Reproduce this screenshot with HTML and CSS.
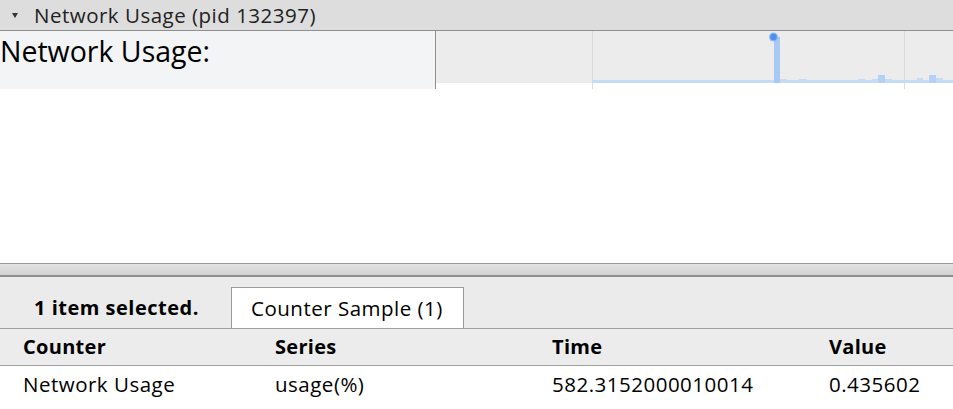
FILE: index.html
```html
<!DOCTYPE html>
<html>
<head>
<meta charset="utf-8">
<link rel="stylesheet" href="styles.css">
</head>
<body>
<div class="page">
  <div class="track-header">
    <span class="caret"></span>
    <span class="track-title">Network Usage (pid 132397)</span>
  </div>
  <div class="track-row">
    <div class="track-label">Network Usage:</div>
    <div class="track-chart">
      <svg width="517" height="58" viewBox="0 0 517 58">
        <rect x="0" y="0" width="517" height="52" fill="#ececec"/>
        <rect x="156" y="0" width="1" height="58" fill="#dcdcdc"/>
        <rect x="468" y="0" width="1" height="58" fill="#dcdcdc"/>
        <rect x="156" y="49" width="361" height="3" fill="#c6dcf6"/>
        <rect x="344" y="48" width="7" height="4" fill="#c6dcf6"/>
        <rect x="363" y="48" width="8" height="4" fill="#c6dcf6"/>
        <rect x="422" y="48" width="7" height="4" fill="#c6dcf6"/>
        <rect x="436" y="48" width="6" height="4" fill="#c6dcf6"/>
        <rect x="442" y="44" width="7" height="8" fill="#b4d0f6"/>
        <rect x="449" y="48" width="7" height="4" fill="#c6dcf6"/>
        <rect x="481" y="47" width="6" height="5" fill="#c6dcf6"/>
        <rect x="493" y="44" width="7" height="8" fill="#b4d0f6"/>
        <rect x="500" y="47" width="7" height="5" fill="#c6dcf6"/>
        <rect x="338" y="6" width="6" height="46" fill="#a8c8f6"/>
        <circle cx="337.5" cy="6" r="4.5" fill="#8db8f5"/>
        <circle cx="337.5" cy="6" r="3.2" fill="#4d8ff0"/>
      </svg>
    </div>
  </div>
  <div class="empty-area"></div>
  <div class="splitter"></div>
  <div class="bottom-panel">
    <div class="tab-strip">
      <div class="selection-info">1 item selected.</div>
      <div class="tab">Counter Sample (1)</div>
    </div>
    <div class="table">
      <div class="row head">
        <div class="cell">Counter</div>
        <div class="cell">Series</div>
        <div class="cell">Time</div>
        <div class="cell">Value</div>
      </div>
      <div class="row data">
        <div class="cell">Network Usage</div>
        <div class="cell">usage(%)</div>
        <div class="cell">582.3152000010014</div>
        <div class="cell">0.435602</div>
      </div>
    </div>
  </div>
</div>
</body>
</html>
```
FILE: styles.css
```css
html, body {
  margin: 0;
  padding: 0;
  background: #ffffff;
}
body {
  font-family: "Open Sans", "Noto Sans", sans-serif;
  color: #000;
  width: 953px;
  height: 409px;
  overflow: hidden;
}
.page {
  display: flex;
  flex-direction: column;
  width: 953px;
  height: 409px;
}
.track-header {
  height: 30px;
  background: #dddddd;
  border-bottom: 1px solid #8e8e8e;
  display: flex;
  align-items: center;
  flex-shrink: 0;
}
.caret {
  width: 0;
  height: 0;
  border-left: 3px solid transparent;
  border-right: 3px solid transparent;
  border-top: 5px solid #333;
  margin-left: 12px;
  margin-right: 16px;
  margin-top: 0;
}
.track-title {
  font-size: 20.5px;
  color: #222;
  line-height: 28px;
  letter-spacing: 0.5px;
}
.track-row {
  display: flex;
  height: 58px;
  flex-shrink: 0;
}
.track-label {
  width: 436px;
  background: #f3f4f6;
  border-right: 1px solid #8e8e8e;
  font-size: 28.5px;
  line-height: 38px;
  padding-top: 1px;
  box-sizing: border-box;
}
.track-chart {
  width: 517px;
  height: 58px;
}
.track-chart svg {
  display: block;
}
.empty-area {
  height: 174px;
  flex-shrink: 0;
}
.splitter {
  height: 11px;
  border-top: 1px solid #9a9a9a;
  border-bottom: 2px solid #8e8e8e;
  background: linear-gradient(#e2e2e2, #d2d2d2);
  flex-shrink: 0;
}
.bottom-panel {
  background: #ebebeb;
  flex: 1;
  display: flex;
  flex-direction: column;
}
.tab-strip {
  display: flex;
  align-items: flex-end;
  height: 51px;
  border-bottom: 1px solid #a0a0a0;
  flex-shrink: 0;
}
.selection-info {
  font-weight: 700;
  font-size: 20px;
  letter-spacing: 0.5px;
  padding-left: 34px;
  box-sizing: border-box;
  width: 231px;
  line-height: 40px;
}
.tab {
  width: 233px;
  height: 41px;
  box-sizing: border-box;
  background: #fff;
  border: 1px solid #999;
  border-bottom: none;
  font-size: 20.5px;
  letter-spacing: 0.5px;
  padding-left: 19px;
  line-height: 40px;
}
.table {
  display: flex;
  flex-direction: column;
  flex: 1;
  background: #fff;
}
.row {
  display: grid;
  grid-template-columns: 252px 277px 277px 1fr;
}
.row.head {
  height: 36px;
  background: #ececec;
  border-bottom: 1px solid #a0a0a0;
  font-weight: 700;
}
.row.data {
  height: 36px;
  background: #fff;
}
.cell {
  padding-left: 23px;
  font-size: 20px;
  letter-spacing: 0.3px;
  line-height: 36px;
}
.row.data .cell {
  font-size: 20.5px;
  letter-spacing: 0.5px;
  line-height: 36px;
}
```
